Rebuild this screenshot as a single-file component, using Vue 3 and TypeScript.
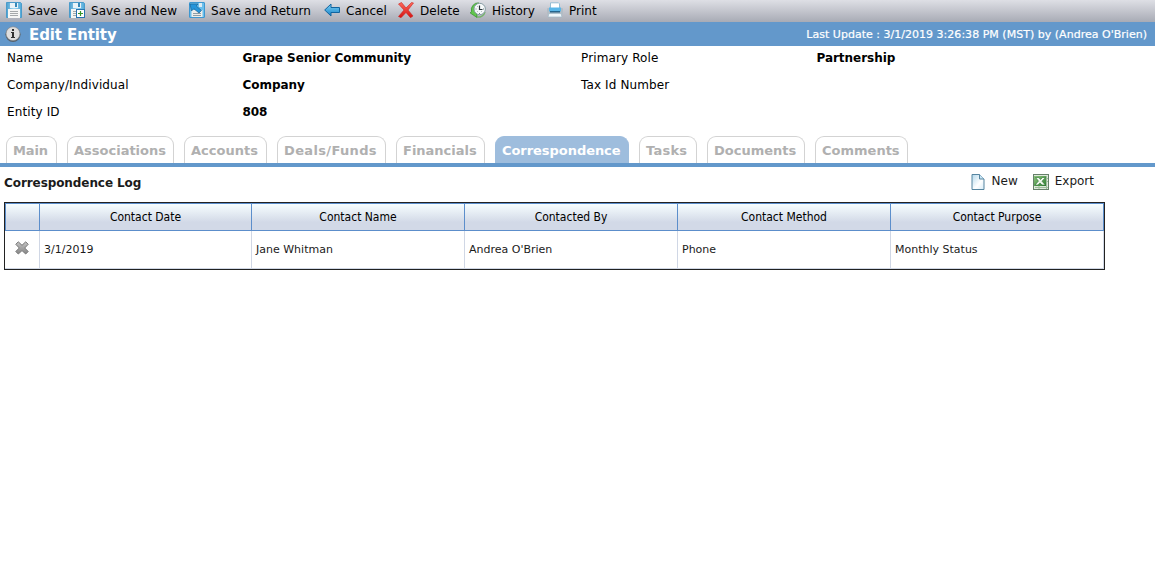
<script setup lang="ts">
interface ToolItem { id: string; label: string; width: number }
interface TabItem { label: string; width: number; spacing?: number }

const tools: ToolItem[] = [
  { id: 'save', label: 'Save', width: 63 },
  { id: 'saveNew', label: 'Save and New', width: 120 },
  { id: 'saveReturn', label: 'Save and Return', width: 135 },
  { id: 'cancel', label: 'Cancel', width: 74 },
  { id: 'delete', label: 'Delete', width: 72 },
  { id: 'history', label: 'History', width: 77 },
  { id: 'print', label: 'Print', width: 70 },
]
const fields = [
  ['Name', 'Grape Senior Community', 'Primary Role', 'Partnership'],
  ['Company/Individual', 'Company', 'Tax Id Number', ''],
  ['Entity ID', '808', '', ''],
]
const tabs: TabItem[] = [
  { label: 'Main', width: 51, spacing: -0.1 },
  { label: 'Associations', width: 107 },
  { label: 'Accounts', width: 83 },
  { label: 'Deals/Funds', width: 109, spacing: 0.35 },
  { label: 'Financials', width: 89 },
  { label: 'Correspondence', width: 134, spacing: -0.05 },
  { label: 'Tasks', width: 58, spacing: 0.25 },
  { label: 'Documents', width: 98 },
  { label: 'Comments', width: 93 },
]
const activeTab = 'Correspondence'
const columns = ['Contact Date', 'Contact Name', 'Contacted By', 'Contact Method', 'Contact Purpose']
const rows = [['3/1/2019', 'Jane Whitman', "Andrea O'Brien", 'Phone', 'Monthly Status']]
</script>

<template>
  <div class="page">
    <svg class="defs" width="0" height="0" aria-hidden="true">
      <defs>
        <linearGradient id="blueFill" x1="0" y1="0" x2="0" y2="1">
          <stop offset="0" stop-color="#7fd0f5" /><stop offset="1" stop-color="#1583c8" />
        </linearGradient>
        <linearGradient id="diskFill" x1="0" y1="0" x2="1" y2="0">
          <stop offset="0" stop-color="#4a9fd0" /><stop offset="0.5" stop-color="#a5d9f2" /><stop offset="1" stop-color="#4da7d8" />
        </linearGradient>
        <linearGradient id="redFill" x1="0" y1="0" x2="0" y2="1">
          <stop offset="0" stop-color="#ff6a5c" /><stop offset="1" stop-color="#d51212" />
        </linearGradient>
        <linearGradient id="greyFill" x1="0" y1="0" x2="0" y2="1">
          <stop offset="0" stop-color="#c4c4c4" /><stop offset="1" stop-color="#858585" />
        </linearGradient>
        <linearGradient id="pageFill" x1="0" y1="0" x2="1" y2="1">
          <stop offset="0" stop-color="#b4d9ec" /><stop offset="0.6" stop-color="#ffffff" /><stop offset="1" stop-color="#d7ecf7" />
        </linearGradient>
        <linearGradient id="greenFill" x1="0" y1="0" x2="1" y2="1">
          <stop offset="0" stop-color="#8cc47c" /><stop offset="1" stop-color="#2e7d32" />
        </linearGradient>
      </defs>
    </svg>

    <nav class="toolbar">
      <a v-for="t in tools" :key="t.id" class="tool" :style="{ width: t.width + 'px' }">
        <svg class="icon" width="16" height="16" viewBox="0 0 16 16">
          <g v-if="t.id === 'save' || t.id === 'saveNew'">
            <path d="M.5 .5h14l1 1v14H.5z" fill="url(#diskFill)" stroke="#4b9bca" />
            <rect x="4" y="1" width="8" height="5" fill="#e9f3f8" />
            <rect x="9" y="1" width="2" height="4" fill="#3688b9" />
            <rect x="2" y="7" width="12" height="9" fill="#f6f6f4" />
            <path d="M4 9.500h8M4 11.500h8M4 13.500h8" stroke="#a6a9aa" />
            <g v-if="t.id === 'saveNew'">
              <rect x="7.500" y="7.500" width="8" height="8" fill="#fff" stroke="#2974b0" />
              <path d="M11.500 9v5M9 11.500h5" stroke="#36952c" stroke-width="1.200" />
            </g>
          </g>
          <g v-else-if="t.id === 'saveReturn'">
            <rect x=".5" y=".5" width="15" height="15" rx=".5" fill="#6bbfec" stroke="#3e97d0" />
            <path d="M2.500 8h11v7h-11z" fill="#eeeeeb" />
            <path d="M4 11.500h8M4 13.500h8" stroke="#8e9da5" />
            <path d="M10 1h3v4h-3z" fill="#dcecf4" />
            <path d="M1 2h8L7.200 4l5.300 4.500-2.500 2.500L4.800 6.700 2.500 9z" fill="#2695da" stroke="#1b6293" stroke-width=".7" />
          </g>
          <path v-else-if="t.id === 'cancel'" d="M.7 8 7 2v3.500h8.500v5H7V14z" fill="url(#blueFill)" stroke="#11649f" stroke-linejoin="round" />
          <path v-else-if="t.id === 'delete'" d="M.5 2 3.500 .5 8 6 13.500 .5 15.500 1 10 8l5 6-2.500 1.700L8 10.500 3 15.700.5 14.500 6 8z" fill="url(#redFill)" stroke="#cb2420" stroke-width=".6" />
          <g v-else-if="t.id === 'history'">
            <path d="M8.500 .8A7 7 0 0 0 1.500 9.500L.2 11 7 15.500V8L4.800 9C3.500 6 5.500 3 9 3z" fill="#62c64e" stroke="#278224" stroke-width=".6" />
            <path d="M7 15a7 7 0 0 0 8-5" fill="none" stroke="#76b36c" stroke-width="1.500" />
            <circle cx="9.700" cy="7" r="5.700" fill="#f6f9fa" stroke="#879ca4" />
            <path d="M9.500 3.500V7.500H12.500" fill="none" stroke="#263238" stroke-width="1.200" />
            <path d="M9.500 11v1M5.500 7h1M13 7h1M7 4l.5.5M7 10l.5-.5M12 10l-.5-.5" stroke="#758188" />
          </g>
          <g v-else>
            <path d="M3.500 .8h8l1 1v5h-9z" fill="#fff" stroke="#94bdd3" />
            <rect x="0" y="6" width="16" height="7" rx="1" fill="#b3bcc4" />
            <path d="M2 5.500h12v4H2z" fill="#58b6e8" />
            <path d="M3 9h10v1.500H3z" fill="#24658c" />
            <path d="M2 11.500h12l1 3.500H1z" fill="#f1f7fa" stroke="#9fb8c5" stroke-width=".7" />
          </g>
        </svg>
        <span class="tool-label">{{ t.label }}</span>
      </a>
    </nav>

    <header class="title-bar">
      <svg class="info" width="16" height="16" viewBox="0 0 16 16">
        <circle cx="8" cy="8.300" r="7.600" fill="#56606a" />
        <circle cx="8" cy="7.700" r="6.900" fill="#dedede" stroke="#8b8f92" stroke-width=".6" />
        <path d="M7 3h2v2H7zM6 6h3v5h1v1H6v-1h1V7H6z" fill="#303030" />
      </svg>
      <h1>Edit Entity</h1>
      <span class="updated">Last Update : 3/1/2019 3:26:38 PM (MST) by (Andrea O'Brien)</span>
    </header>

    <section class="fields">
      <div v-for="f in fields" :key="f[0]" class="field-row">
        <span>{{ f[0] }}</span><b>{{ f[1] }}</b><span>{{ f[2] }}</span><b>{{ f[3] }}</b>
      </div>
    </section>

    <nav class="tabs">
      <a v-for="t in tabs" :key="t.label" class="tab" :class="{ active: t.label === activeTab }" :style="{ width: t.width + 'px', letterSpacing: (t.spacing ?? 0) + 'px' }">{{ t.label }}</a>
    </nav>

    <div class="section-head">
      <h2>Correspondence Log</h2>
      <a class="action new">
        <svg class="icon" width="16" height="16" viewBox="0 0 16 16">
          <path d="M2 .5h7.500l4.500 4.500v10.500H2z" fill="url(#pageFill)" stroke="#5685a0" />
          <path d="M9.500 .5V5H14" fill="#c9e6f5" stroke="#5685a0" />
        </svg>New
      </a>
      <a class="action">
        <svg class="icon" width="16" height="16" viewBox="0 0 16 16">
          <rect x=".5" y=".5" width="15" height="15" fill="#dfe8dc" stroke="#66806a" />
          <path d="M12 4.500h3M12 7.500h3M2 13.500h13M13.500 2v13M6 12v3" stroke="#9ebd9c" />
          <rect x="1" y="2" width="12" height="10" fill="url(#greenFill)" />
          <path d="M2.500 3.500h3.300L7.500 5.500 9.500 3.500h3L9 7.200l3.300 3.800H9L7 8.900 5 11H2l3.500-3.900z" fill="#f1f8ee" stroke="#2c7131" stroke-width=".6" />
        </svg>Export
      </a>
    </div>

    <table class="grid">
      <colgroup>
        <col class="col-del"><col class="col-date"><col class="col-std"><col class="col-std"><col class="col-std"><col class="col-last">
      </colgroup>
      <thead>
        <tr><th class="del"></th><th v-for="c in columns" :key="c">{{ c }}</th></tr>
      </thead>
      <tbody>
        <tr v-for="r in rows" :key="r[1]">
          <td class="del">
            <svg width="14" height="14" viewBox="0 0 14 14">
              <path d="M3.300 .8 7 4.300 10.700 .8 13.200 3.300 9.700 7 13.200 10.500 10.700 13 7 9.600 3.300 13 .8 10.500 4.300 7 .8 3.300z" fill="url(#greyFill)" stroke="#777" stroke-linejoin="round" />
            </svg>
          </td>
          <td v-for="c in r" :key="c">{{ c }}</td>
        </tr>
      </tbody>
    </table>
  </div>
</template>

<style>
body { background: #fff; overflow: hidden; }
</style>

<style scoped>
.page { width: 1155px; height: 564px; overflow: hidden; color: #000; font: 12px/15px Verdana, "DejaVu Sans", sans-serif; }
.defs { display: block; }
.icon { flex: none; display: block; }
.toolbar { display: flex; height: 22px; padding-left: 6px; background: linear-gradient(#dedfe5, #a8abb5); }
.tool { display: flex; flex: none; align-items: flex-start; padding-top: 2px; box-sizing: border-box; white-space: nowrap; }
.tool-label { margin: 2px 0 0 6px; letter-spacing: 0.02px; }
.title-bar { display: flex; align-items: center; height: 24px; padding: 0 8px 0 5px; background: #6398cb; color: #fff; }
h1 { margin: 1px auto 0 8px; font-size: 15px; line-height: 24px; letter-spacing: -0.1px; }
.updated { font-size: 11px; white-space: nowrap; letter-spacing: 0.02px; -webkit-text-stroke: 0.2px #fff; }
.fields { padding: 0 0 9px 7px; }
.field-row { display: grid; grid-template-columns: 235.500px 338.500px 235.500px 1fr; height: 27px; line-height: 24px; }
.field-row span { letter-spacing: 0.12px; }
.field-row b { letter-spacing: -0.04px; }
.tabs { display: flex; gap: 10px; height: 27px; padding-left: 6px; border-bottom: 4px solid #6398cb; }
.tab { flex: none; box-sizing: border-box; height: 27px; padding-left: 6px; border: 1px solid #d3d3d3; border-bottom: 0; border-radius: 9px 9px 0 0; font-size: 13px; font-weight: bold; line-height: 27px; color: #b0b0b0; white-space: nowrap; }
.tab.active { background: #9ebddd; border-color: #9ebddd; color: #fff; }
.section-head { display: flex; align-items: center; height: 35px; padding: 0 61px 0 4px; box-sizing: border-box; }
h2 { margin: -2px auto 0 0; font-size: 12px; line-height: 15px; letter-spacing: -0.08px; color: #1b1b1b; }
.action { display: flex; gap: 6px; line-height: 15px; margin-top: -5px; color: #1b1b1b; }
.action.new { margin-right: 15px; }
.grid { table-layout: fixed; width: 1101px; margin-left: 4px; border: 1px solid #222; border-collapse: separate; border-spacing: 0; font-size: 11px; }
.col-del { width: 35px; }
.col-date { width: 212px; }
.col-std { width: 213px; }
.col-last { width: 213px; }
th { height: 28px; box-sizing: border-box; padding: 0; border: solid #5c8ecb; border-width: 1px 1px 1px 0; background: linear-gradient(#f7feff, #d2d9e7 70%, #d2d9e7); font: 12px/14px Tahoma, "DejaVu Sans Condensed", sans-serif; }
td { height: 38px; box-sizing: border-box; padding: 0 0 1px 4px; border-right: 1px solid #d0d7e5; border-bottom: 1px solid #d0d7e5; color: #1b1b1b; }
.grid .del { padding: 0; text-align: center; }
th.del { border-left-width: 1px; }
.del svg { display: block; margin: -3px auto 0; }
</style>
